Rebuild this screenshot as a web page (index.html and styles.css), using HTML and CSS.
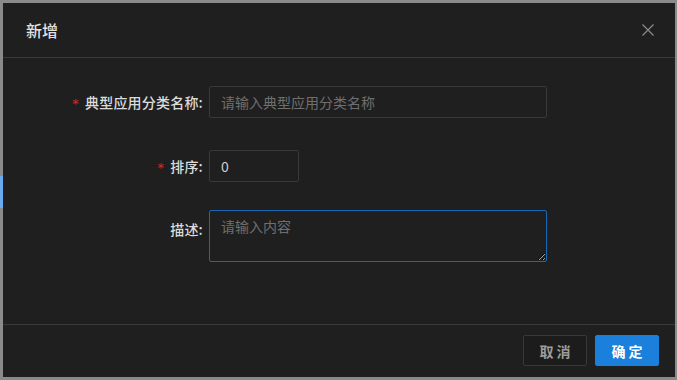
FILE: index.html
```html
<!DOCTYPE html>
<html>
    <head>
        <title>新增</title>
        <link rel="stylesheet" href="styles.css">
    </head>
    <body>
        <div class="backdrop">
            <div class="behind-tab"></div>
            <div class="modal">
                <div class="modal-header">
                    <div class="modal-title">新增</div>
                    <div class="modal-close">
                        <svg width="12" height="12" viewBox="0 0 12 12">
                            <path d="M0.5 0.5 L11.5 11.5 M11.5 0.5 L0.5 11.5" stroke="#8c8c8c" stroke-width="1.2" fill="none"/>
                        </svg>
                    </div>
                </div>
                <div class="modal-body">
                    <div class="form-row row-name">
                        <label class="form-label"><span class="required">*</span>典型应用分类名称:</label>
                        <input type="text" class="input input-wide" placeholder="请输入典型应用分类名称">
                    </div>
                    <div class="form-row row-sort">
                        <label class="form-label"><span class="required">*</span>排序:</label>
                        <input type="text" class="input input-short" value="0">
                    </div>
                    <div class="form-row row-desc">
                        <label class="form-label label-top">描述:</label>
                        <textarea class="input textarea" placeholder="请输入内容"></textarea>
                    </div>
                </div>
                <div class="modal-footer">
                    <div class="btn btn-cancel">取 消</div>
                    <div class="btn btn-ok">确 定</div>
                </div>
            </div>
        </div>
    </body>
</html>
```

FILE: styles.css
```css
html, body {
    margin: 0;
    padding: 0;
}
body {
    font-family: "Noto Sans CJK SC", "Noto Sans", sans-serif;
    background: #8a8a8a;
    width: 677px;
    height: 380px;
    overflow: hidden;
}
.backdrop {
    position: relative;
    padding: 3px 2px 3px 3px;
    height: 374px;
}
.behind-tab {
    position: absolute;
    left: 0;
    top: 176px;
    width: 3px;
    height: 32px;
    background: #6aaaf0;
}
.modal {
    background: #1f1f1f;
    height: 374px;
    display: flex;
    flex-direction: column;
}
.modal-header {
    height: 54px;
    padding: 0 23px;
    display: flex;
    align-items: center;
    justify-content: space-between;
    border-bottom: 1px solid #3a3a3a;
}
.modal-title {
    font-size: 16px;
    color: #e2e2e2;
    font-weight: 500;
}
.modal-close {
    width: 12px;
    height: 12px;
    margin-right: -2px;
    display: flex;
}
.modal-body {
    flex: 1;
    padding-top: 28px;
}
.form-row {
    display: flex;
    align-items: center;
}
.row-name {
    margin-bottom: 32px;
}
.row-sort {
    margin-bottom: 28px;
}
.row-desc {
    align-items: flex-start;
}
.form-label {
    width: 206px;
    padding-right: 6px;
    box-sizing: border-box;
    text-align: right;
    font-size: 14px;
    font-weight: 500;
    letter-spacing: 0.2px;
    color: #dcdcdc;
    white-space: nowrap;
}
.label-top {
    padding-top: 9px;
}
.required {
    color: #e02828;
    margin-right: 6px;
    font-family: "DejaVu Sans", sans-serif;
    font-size: 13px;
}
.input {
    box-sizing: border-box;
    background: #1f1f1f;
    border: 1px solid #393939;
    border-radius: 2px;
    height: 32px;
    padding: 0 11px;
    font-family: "Noto Sans CJK SC", "Noto Sans", sans-serif;
    font-size: 14px;
    color: #cfcfcf;
    outline: none;
}
.input::placeholder {
    color: #6f6f6f;
}
.input-wide {
    width: 338px;
}
.input-short {
    width: 90px;
}
.textarea {
    width: 338px;
    height: 52px;
    padding: 4px 11px;
    border-color: #1a67b5;
    resize: vertical;
    line-height: 22px;
}
.modal-footer {
    border-top: 1px solid #3a3a3a;
    padding: 10px 16px 11px;
    display: flex;
    justify-content: flex-end;
    gap: 8px;
}
.btn {
    box-sizing: border-box;
    width: 64px;
    height: 31px;
    border-radius: 2px;
    display: flex;
    align-items: center;
    justify-content: center;
    font-size: 14px;
    font-weight: 600;
    cursor: pointer;
    user-select: none;
}
.btn-cancel {
    border: 1px solid #383838;
    color: #9c9c9c;
    background: #1c1c1c;
}
.btn-ok {
    background: #1b7fdc;
    color: #ffffff;
    border: 1px solid #1b7fdc;
}
```
